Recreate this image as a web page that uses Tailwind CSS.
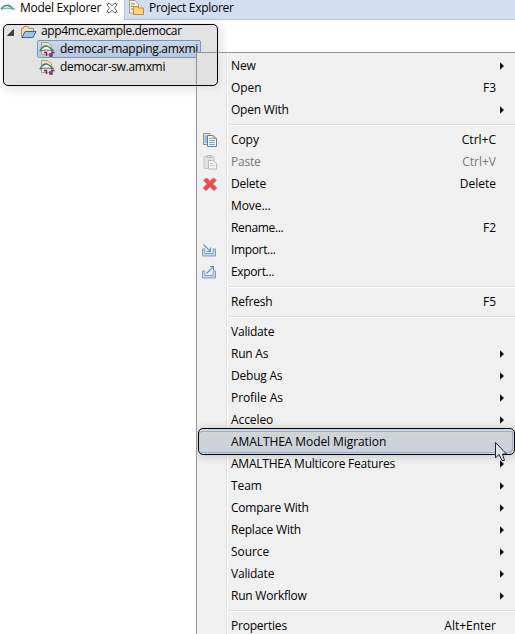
<!DOCTYPE html>
<html lang="en">
<head>
<meta charset="utf-8">
<title>Model Explorer</title>
<script src="https://cdn.jsdelivr.net/npm/@tailwindcss/browser@4"></script>
</head>
<body class="bg-white">
<div class="relative w-[515px] h-[634px] overflow-hidden bg-white text-black font-['Open_Sans','Noto_Sans',sans-serif] text-[12px] leading-[22px] whitespace-nowrap">
  <header class="flex h-[20px] leading-[16px]">
    <div class="flex w-[124px] h-[20px] bg-white shrink-0">
      <svg class="w-[20px] h-[16px] shrink-0" viewBox="0 0 20 16" fill="none"><path d="M1 9C3 6.500 6 5 8.500 5.500C11 6 11 8 14.500 9.500" stroke="#28865e" stroke-width="1.300"/><path d="M1 9.500C5 7.500 9 7.500 14.500 9.500" stroke="#62b88d" stroke-width="1.200"/></svg>
      <span class="w-[86px] tracking-[-0.3px]">Model Explorer</span>
      <svg class="w-[12px] h-[16px]" viewBox="0 0 12 16" fill="none"><path d="M1.500 3.500H4L6 6L8 3.500H10.500V5.500L8.500 8L10.500 10.500V12.500H8L6 10L4 12.500H1.500V10.500L3.500 8L1.500 5.500Z" stroke="#666" stroke-width="1"/></svg>
    </div>
    <div class="flex flex-1 h-[20px] bg-[#d2dff0] border-l border-b border-[#b5c7de]">
      <svg class="ml-[3px] mr-[4px] w-[17px] h-[16px] shrink-0" viewBox="0 0 17 16"><path d="M1.500 .5H7L10.500 4V13H1.500Z" fill="#f7f4e6" stroke="#ab9c75"/><path d="M3 4H7M3 6.500H7M3 9H6" stroke="#6583b1"/><path d="M5.500 8L6.500 6.500H9.500L10.500 8H15.500V14.500H5.500Z" fill="#ffd875" stroke="#c48631"/></svg>
      <span class="tracking-[-0.3px]">Project Explorer</span>
    </div>
  </header>

  <section class="absolute left-[3px] top-[24px] w-[215px] h-[62px] bg-[#e3e3e3] rounded-[5px] shadow-[2px_2px_9px_3px_#00000018]">
    <div class="flex flex-col leading-[14px]">
      <div class="flex h-[16px] items-center">
        <svg class="ml-[4px] mr-[6px] w-[7px] h-[7px]" viewBox="0 0 7 7"><path d="M6.500 .5V6.500H.5Z" fill="#404040" stroke="#222" stroke-width=".7"/></svg>
        <svg class="w-[17px] h-[14px] mr-[4px]" viewBox="0 0 17 14"><path d="M1.500 11.500V3.500H3L4 1.500H8L9 3.500H13.500V6" fill="#f5dfaa" stroke="#b78b46"/><path d="M2 12.500L5 6.500H16L13 12.500Z" fill="#9fc3ed" stroke="#30649e"/></svg>
        <span class="relative -top-px tracking-[-0.38px]">app4mc.example.democar</span>
      </div>
      <div class="flex items-center ml-[34px] w-[164px] h-[18px] bg-linear-to-b from-[#cdd7e4] to-[#b8c9df] border border-[#6f99ca] rounded-[2px]">
        <svg class="ml-[1px] mr-[5px] w-[16px] h-[16px] shrink-0" viewBox="0 0 16 16" fill="none"><path d="M2.500 1.500H9L12.500 5V13.500H2.500Z" fill="#e9e3ce" stroke="#aaa080"/><path d="M.8 10C4 5 7 4.500 9 5.500C11.500 6.500 12 8.500 14.500 9.500" fill="#f5f5ef" stroke="#397460" stroke-width="1.300"/><path d="M.8 10C5 8.800 10 8.800 14.500 9.800" stroke="#397460"/><path d="M5 11.500H7.500V15M15.500 11.500H13V15H11V12" stroke="#8a1868" stroke-width="1.400"/></svg>
        <span class="tracking-[-0.3px]">democar-mapping.amxmi</span>
      </div>
      <div class="flex items-center ml-[35px] h-[18px]">
        <svg class="ml-[1px] mr-[5px] w-[16px] h-[16px] shrink-0" viewBox="0 0 16 16" fill="none"><path d="M2.500 1.500H9L12.500 5V13.500H2.500Z" fill="#e9e3ce" stroke="#aaa080"/><path d="M.8 10C4 5 7 4.500 9 5.500C11.500 6.500 12 8.500 14.500 9.500" fill="#f5f5ef" stroke="#397460" stroke-width="1.300"/><path d="M.8 10C5 8.800 10 8.800 14.500 9.800" stroke="#397460"/><path d="M5 11.500H7.500V15M15.500 11.500H13V15H11V12" stroke="#8a1868" stroke-width="1.400"/></svg>
        <span class="tracking-[-0.3px]">democar-sw.amxmi</span>
      </div>
    </div>
  </section>

  <nav id="menu" class="absolute left-[196px] top-[52px] w-[319px] h-[582px] bg-[#f0f0f0] border-l border-t border-[#979797] pt-[2px] overflow-hidden bg-[linear-gradient(90deg,transparent_29px,#e2e3e3_29px,#e2e3e3_30px,#fff_30px,#fff_31px,transparent_31px)]"></nav>

  <div class="absolute left-[3px] top-[24px] w-[215px] h-[62px] border border-black rounded-[5px]"></div>
  <div class="absolute left-[197px] top-[53px] w-[20px] h-[32px] bg-black/6 rounded-br-[4px] shadow-[2px_2px_7px_#00000018]"></div>
  <svg class="absolute left-[494px] top-[441px] w-[15px] h-[22px]" viewBox="0 0 15 22"><path d="M1.500 1.500V17L5 13.500L8 19.500H10.500L8.500 13H12.500Z" fill="#dfe3e7" stroke="#202433" stroke-width="1"/></svg>
</div>
<template id="copy"><svg class="w-[16px] h-[16px]" viewBox="0 0 16 16"><path d="M1.500 1.500H8V12.500H1.500Z" fill="#dfeaf2" stroke="#9b9668"/><path d="M2.500 4H5M2.500 6H5M2.500 8H5M2.500 10H5" stroke="#6686b4"/><path d="M5.500 3.500H11L14.500 6.500V14.500H5.500Z" fill="#f6faff" stroke="#647f9c"/><path d="M11 3.500V6.500H14.500" fill="#e8c580" stroke="#b29654"/><path d="M7 6.500H10M7 8.500H13M7 10.500H13M7 12.500H13" stroke="#81a3cd"/></svg></template>
<template id="paste"><svg class="w-[16px] h-[16px]" viewBox="0 0 16 16"><path d="M2 2.500H12V14.500H2Z" fill="#e0e0e0" stroke="#c8c8c8"/><path d="M5 3.500V1.500H9.500V3.500Z" fill="#ddd" stroke="#b9b9b9"/><path d="M6.500 6.500H11L14.500 9.500V15H6.500Z" fill="#f4f4f4" stroke="#b9b9b9"/><path d="M8 9.500H11M8 11.500H13" stroke="#ccc"/></svg></template>
<template id="delete"><svg class="w-[16px] h-[16px]" viewBox="0 0 16 16"><path d="M4.500 2L8 5.500L11.500 2L14 4.500L10.500 8L14.500 12L12 14.500L8 10.500L4 14.500L1.500 12L5.500 8L2 4.500Z" fill="#ef4b48" stroke="#d8444a" stroke-linejoin="round"/></svg></template>
<template id="import"><svg class="relative -left-px top-px w-[16px] h-[16px]" viewBox="0 0 16 16" fill="none"><path d="M4 6H1.500V13H14.500V6H12M4 6V10.500H12V6" fill="#c9d4e8" stroke="#849bc4"/><path d="M4.500 5.500H11.500V10H4.500Z" fill="#f0f0f0"/><path d="M2.500 1.500L9.500 8.500M9.500 4.500V8.500H5.500" stroke="#5c96c0" stroke-width="1.100"/></svg></template>
<template id="export"><svg class="relative -left-px top-px w-[16px] h-[16px]" viewBox="0 0 16 16" fill="none"><path d="M4 6H1.500V13H14.500V6H12M4 6V10.500H12V6" fill="#c9d4e8" stroke="#849bc4"/><path d="M4.500 5.500H11.500V10H4.500Z" fill="#f0f0f0"/><path d="M5.500 8.500L12.500 1.500M9 1.500H12.500V5" stroke="#5c96c0" stroke-width="1.100"/></svg></template>
<template id="arrow"><svg class="w-[4px] h-[8px] mr-[11px]" viewBox="0 0 4 8"><path d="M0 .3L4 4L0 7.700Z" fill="#111"/></svg></template>
<script>
const tight = "tracking-[-0.22px]", wide = "tracking-[-0.08px]", dots = "tracking-[-0.35px]";
const items = [["New",">"],["Open","F3"],["Open With",">",tight],null,["Copy","Ctrl+C",wide,"copy"],["Paste","Ctrl+V",tight,"paste"],["Delete","Delete",tight,"delete"],["Move..."],["Rename...","F2",dots],["Import...","",dots,"import"],["Export...","",dots,"export"],null,["Refresh","F5",tight],null,["Validate"," ",tight],["Run As",">",tight],["Debug As",">",tight],["Profile As",">"],["Acceleo",">"],["AMALTHEA Model Migration"],["AMALTHEA Multicore Features",">",tight],["Team",">"],["Compare With",">",tight],["Replace With",">",tight],["Source",">"],["Validate",">",tight],["Run Workflow",">",tight],null,["Properties","Alt+Enter",tight]];
const art = id => id ? document.getElementById(id).innerHTML : "";
document.getElementById("menu").innerHTML = items.map(item => {
  if (!item) return '<div class="h-[8px] pt-[3px] pl-[31px]"><div class="h-[2px] bg-white border-t border-[#dedede]"></div></div>';
  const [label, key = "", spacing = wide, icon] = item;
  const active = label === "AMALTHEA Model Migration" ? "relative ml-[1px] -mt-[3px] -mb-[2px] h-[27px] border border-black rounded-[5px] bg-linear-to-b from-[#d4d5d6] to-[#c9d1da] shadow-[inset_0_2px_0_#d4d4d4,inset_0_3px_0_#94add0,inset_-1px_-1px_0_#ccd7e5,inset_-2px_-2px_0_#94add0,0_1px_7px_2px_#00000022] pl-[3px]" : "h-[22px] pl-[5px]";
  return `<div class="flex items-center ${active} ${icon === "paste" ? "text-[#777]" : ""}"><span class="w-[16px] mr-[13px] shrink-0">${art(icon)}</span><span class="flex-1 ${spacing}">${label}</span>${key === ">" ? art("arrow") : `<span class="mr-[19px]">${key}</span>`}</div>`;
}).join("");
</script>
</body>
</html>
